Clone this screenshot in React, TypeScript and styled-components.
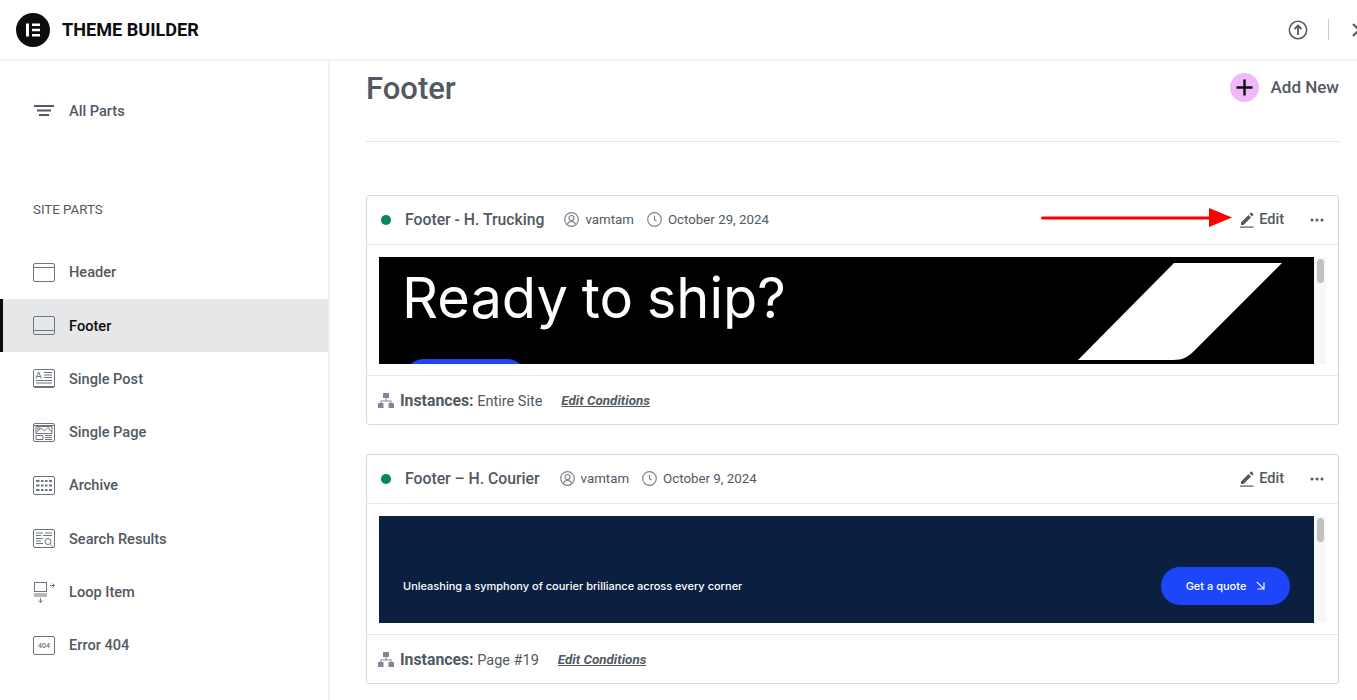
import React from 'react';
import styled, {createGlobalStyle} from 'styled-components';

const GlobalStyle = createGlobalStyle`
  html, body {
    margin: 0;
    padding: 0;
    height: 100%;
    overflow: hidden;
    background: #fff;
    font-family: Roboto, "Liberation Sans", sans-serif;
  }
`;

const Outline = () => <rect x="0.5" y="0.5" width="21" height="18" rx="1.5" />;

const HeaderIcon = () => (
    <SideSvg viewBox="0 0 22 19">
        <Outline />
        <path d="M1 4.500h20" />
    </SideSvg>
);

const FooterIcon = () => (
    <SideSvg viewBox="0 0 22 19">
        <Outline />
        <path d="M1 14.500h20" />
    </SideSvg>
);

const PostIcon = () => (
    <SideSvg viewBox="0 0 22 19">
        <Outline />
        <path d="M3 9.500 5.700 3l2.700 6.500M4 7.500h3.400M11 3.500h8M11 6h8M11 8.500h8M3 11.500h16M3 14h16M1 17.500h20" />
    </SideSvg>
);

const PageIcon = () => (
    <SideSvg viewBox="0 0 22 19">
        <Outline />
        <path d="M1 2.500h20M3 9.500 8 5l3.500 3 3.500-3.500 4 4.500M3 3.500h16v7H3zM3 12.500h7v4H3zM12 12.500h7M12 14.500h7M12 16.500h7" />
        <circle cx="5.500" cy="5.500" r="1" />
    </SideSvg>
);

const ArchiveIcon = () => (
    <SideSvg viewBox="0 0 22 19">
        <Outline />
        <path d="M3 5h3.500M8 5h2.500M12 5h2.500M16 5h3M3 9.500h3.500M8 9.500h2.500M12 9.500h2.500M16 9.500h3M3 14h3.500M8 14h2.500M12 14h2.500M16 14h3" strokeWidth="2.200" />
    </SideSvg>
);

const SearchIcon = () => (
    <SideSvg viewBox="0 0 22 19">
        <Outline />
        <path d="M3 4h7M12 4h7M3 6.500h5M10 6.500h9M3 9.500h7M3 12h5M3 14.500h7M17.500 15.500l2 2" />
        <circle cx="15" cy="12.500" r="3" />
    </SideSvg>
);

const LoopIcon = () => (
    <SideSvg viewBox="0 0 22 21">
        <rect x="1.500" y="0.500" width="12" height="9" />
        <path d="M1 12h13M1 14h13M17 3.500h4.500M19.500 1.500l2 2-2 2M7.500 16v4.500M5.500 18.500l2 2 2-2" />
    </SideSvg>
);

const ErrorIcon = () => (
    <SideSvg viewBox="0 0 22 19">
        <Outline />
        <text x="11" y="12" textAnchor="middle" fontSize="7" fill="currentColor" stroke="none">404</text>
    </SideSvg>
);

const PartsIcon = () => (
    <svg width="22" height="12" viewBox="0 0 22 12" fill="currentColor">
        <rect x="1" y="0" width="20" height="2" />
        <rect x="4" y="4.500" width="14" height="2" />
        <rect x="6" y="9" width="10" height="2" />
    </svg>
);

const Logo = () => (
    <svg width="34" height="34" viewBox="0 0 34 34">
        <circle cx="17" cy="17" r="17" fill="#0c0d0e" />
        <path d="M10 10.500h3v13h-3zM16 10.500h8v2.600h-8zM16 15.700h8v2.600h-8zM16 20.900h8v2.600h-8z" fill="#fff" />
    </svg>
);

const UploadIcon = () => (
    <svg width="20" height="20" viewBox="0 0 20 20" fill="none" stroke="#515962" strokeWidth="1.500">
        <circle cx="10" cy="10" r="8.700" />
        <path d="M10 15V6M6.500 9 10 5.500 13.500 9" strokeWidth="1.800" />
    </svg>
);

const CloseIcon = () => (
    <svg width="14" height="14" viewBox="0 0 14 14" fill="none" stroke="#515962" strokeWidth="2">
        <path d="M1 1l12 12M13 1 1 13" />
    </svg>
);

const PlusIcon = () => (
    <svg width="17" height="17" viewBox="0 0 17 17" fill="none" stroke="#0c0d0e" strokeWidth="2.400">
        <path d="M8.500 0.500v16M0.500 8.500h16" />
    </svg>
);

const UserIcon = () => (
    <svg width="15" height="15" viewBox="0 0 15 15" fill="none" stroke="#7d8490" strokeWidth="1.200">
        <circle cx="7.500" cy="7.500" r="6.800" />
        <circle cx="7.500" cy="6" r="2.500" />
        <path d="M3.200 12.500c.8-2 2.400-3 4.300-3s3.500 1 4.300 3" />
    </svg>
);

const ClockIcon = () => (
    <svg width="15" height="15" viewBox="0 0 15 15" fill="none" stroke="#7d8490" strokeWidth="1.200">
        <circle cx="7.500" cy="7.500" r="6.800" />
        <path d="M7.500 3.800v4l2 1.200" />
    </svg>
);

const PencilIcon = () => (
    <svg width="14" height="16" viewBox="0 0 14 16" fill="#515962">
        <path d="M1 10.500 8.500 3l2.500 2.500L3.500 13H1zM9.500 2l1.200-1.200a.8.8 0 0 1 1.100 0l1.400 1.400a.8.8 0 0 1 0 1.100L12 4.500z" />
        <rect x="0" y="14.500" width="13.500" height="1.200" />
    </svg>
);

const DotsIcon = () => (
    <svg width="14" height="4" viewBox="0 0 14 4" fill="#515962">
        <circle cx="2" cy="2" r="1.500" />
        <circle cx="7" cy="2" r="1.500" />
        <circle cx="12" cy="2" r="1.500" />
    </svg>
);

const SitemapIcon = () => (
    <svg width="16" height="15" viewBox="0 0 16 15" fill="#7d8799">
        <rect x="5" y="0" width="6" height="5" rx="0.600" />
        <rect x="0" y="10" width="5.500" height="5" rx="0.600" />
        <rect x="10.500" y="10" width="5.500" height="5" rx="0.600" />
        <path d="M7.500 5h1v2.500h5V10h-1V8.500h-9V10h-1V7.500h5z" />
    </svg>
);

const ArrowIcon = () => (
    <svg width="192" height="20" viewBox="0 0 192 20">
        <path d="M1.500 10H170" stroke="#ff0000" strokeWidth="3" strokeLinecap="round" />
        <path d="M168 0l23 9.500L168 19z" fill="#ff0000" />
    </svg>
);

const Slash = () => (
    <svg width="205" height="98" viewBox="0 0 205 98">
        <path d="M96 0h108l-87 87c-7 7-12 10-22 10H0z" fill="#fff" />
    </svg>
);

const QuoteArrow = () => (
    <svg width="9" height="9" viewBox="0 0 9 9" fill="none" stroke="#fff" strokeWidth="1.200">
        <path d="M0.800 0.800l7 7M8 1.500V8H1.500" />
    </svg>
);

const parts = [
    {label: 'Header', icon: <HeaderIcon />},
    {label: 'Footer', icon: <FooterIcon />, active: true},
    {label: 'Single Post', icon: <PostIcon />},
    {label: 'Single Page', icon: <PageIcon />},
    {label: 'Archive', icon: <ArchiveIcon />},
    {label: 'Search Results', icon: <SearchIcon />},
    {label: 'Loop Item', icon: <LoopIcon />},
    {label: 'Error 404', icon: <ErrorIcon />},
];

type TemplateCardProps = {
    title: string;
    date: string;
    instances: string;
    arrow?: boolean;
    children: React.ReactNode;
};

function TemplateCard({title, date, instances, arrow, children}: TemplateCardProps) {
    return (
        <Card>
            <CardHead>
                <StatusDot />
                <CardTitle>{title}</CardTitle>
                <Meta>
                    <UserIcon />
                    <span>vamtam</span>
                </Meta>
                <Meta>
                    <ClockIcon />
                    <span>{date}</span>
                </Meta>
                <EditLink>
                    <PencilIcon />
                    <span>Edit</span>
                </EditLink>
                <DotsIcon />
            </CardHead>
            <PreviewWrap>
                <Preview>
                    {children}
                    <ScrollTrack>
                        <ScrollThumb />
                    </ScrollTrack>
                </Preview>
            </PreviewWrap>
            <CardFoot>
                <SitemapIcon />
                <Instances>
                    <strong>Instances:</strong> {instances}
                </Instances>
                <Conditions>Edit Conditions</Conditions>
            </CardFoot>
            {arrow && (
                <ArrowMark>
                    <ArrowIcon />
                </ArrowMark>
            )}
        </Card>
    );
}

function App() {
    return (
        <Page>
            <GlobalStyle />
            <TopBar>
                <Logo />
                <Brand>THEME BUILDER</Brand>
                <TopActions>
                    <UploadIcon />
                    <TopDivider />
                    <CloseIcon />
                </TopActions>
            </TopBar>
            <Body>
                <Sidebar>
                    <AllParts>
                        <PartsIcon />
                        <span>All Parts</span>
                    </AllParts>
                    <SideHeading>SITE PARTS</SideHeading>
                    {parts.map((part) => (
                        <SideItem key={part.label} $active={part.active}>
                            <IconSlot>{part.icon}</IconSlot>
                            <span>{part.label}</span>
                        </SideItem>
                    ))}
                </Sidebar>
                <Main>
                    <TitleRow>
                        <Title>Footer</Title>
                        <AddNew>
                            <AddCircle>
                                <PlusIcon />
                            </AddCircle>
                            <AddLabel>Add New</AddLabel>
                        </AddNew>
                    </TitleRow>
                    <CardList>
                        <TemplateCard title="Footer - H. Trucking" date="October 29, 2024" instances="Entire Site" arrow>
                            <ShipBanner>
                                <ShipColumn>
                                    <ShipHeading>Ready to ship?</ShipHeading>
                                    <ShipButton />
                                </ShipColumn>
                                <Slash />
                            </ShipBanner>
                        </TemplateCard>
                        <TemplateCard title="Footer – H. Courier" date="October 9, 2024" instances="Page #19">
                            <CourierBanner>
                                <CourierText>Unleashing a symphony of courier brilliance across every corner</CourierText>
                                <QuoteButton>
                                    <span>Get a quote</span>
                                    <QuoteArrow />
                                </QuoteButton>
                            </CourierBanner>
                        </TemplateCard>
                    </CardList>
                </Main>
            </Body>
        </Page>
    );
}

const Page = styled.div`
  width: 1357px;
  height: 700px;
  overflow: hidden;
  display: flex;
  flex-direction: column;
  color: #515962;
`;

const TopBar = styled.header`
  flex: none;
  height: 59px;
  display: flex;
  align-items: center;
  padding-left: 16px;
  border-bottom: 2px solid #f1f2f3;
`;

const Brand = styled.div`
  margin-left: 12px;
  font-size: 18.1px;
  font-weight: 700;
  color: #0c0d0e;
`;

const TopActions = styled.div`
  margin-left: auto;
  margin-right: -9px;
  display: flex;
  align-items: center;
  gap: 20px;
`;

const TopDivider = styled.div`
  width: 1px;
  height: 21px;
  margin-right: 3px;
  background: #c9ccd2;
`;

const Body = styled.div`
  flex: 1;
  display: flex;
  min-height: 0;
`;

const Sidebar = styled.aside`
  flex: none;
  width: 328px;
  border-right: 2px solid #f1f2f3;
  padding-top: 23.7px;
`;

const SideSvg = styled.svg`
  width: 22px;
  height: auto;
  fill: none;
  stroke: currentColor;
  stroke-width: 1;
  color: #6d7480;
`;

const IconSlot = styled.div`
  width: 22px;
  display: flex;
  align-items: center;
  justify-content: center;
`;

const AllParts = styled.div`
  height: 53px;
  display: flex;
  align-items: center;
  gap: 14px;
  padding-left: 33px;
  font-size: 14.6px;
  font-weight: 500;
`;

const SideHeading = styled.div`
  margin: 57px 0 21px 33px;
  height: 30px;
  line-height: 30px;
  font-size: 13.3px;
`;

const SideItem = styled.div<{$active?: boolean}>`
  height: 53.29px;
  box-sizing: border-box;
  display: flex;
  align-items: center;
  gap: 14px;
  padding-left: ${({$active}) => ($active ? '30px' : '33px')};
  border-left: ${({$active}) => ($active ? '3px solid #0c0d0e' : 'none')};
  background: ${({$active}) => ($active ? '#e6e7e9' : 'transparent')};
  color: ${({$active}) => ($active ? '#0c0d0e' : '#515962')};
  font-size: 14.6px;
  font-weight: 500;
`;

const Main = styled.main`
  flex: 1;
  min-width: 0;
  padding: 0 18px 0 36px;
`;

const TitleRow = styled.div`
  height: 81px;
  box-sizing: border-box;
  display: flex;
  align-items: center;
  justify-content: space-between;
  padding-bottom: 28px;
  padding-top: 1px;
  border-bottom: 1px solid #e3e5e8;
`;

const Title = styled.h1`
  margin: 2px 0 0;
  font-size: 31px;
  font-weight: 500;
  color: #515962;
`;

const AddNew = styled.div`
  display: flex;
  align-items: center;
  gap: 12px;
  font-size: 17px;
  font-weight: 500;
`;

const AddLabel = styled.span`
  margin-bottom: 2px;
`;

const AddCircle = styled.div`
  width: 29px;
  height: 29px;
  border-radius: 50%;
  background: #f1b9fb;
  display: flex;
  align-items: center;
  justify-content: center;
`;

const CardList = styled.div`
  margin-top: 53px;
  display: flex;
  flex-direction: column;
  gap: 29px;
`;

const Card = styled.section`
  position: relative;
  height: 230px;
  box-sizing: border-box;
  border: 1px solid #d5d8dc;
  border-radius: 3px;
  background: #fff;
`;

const CardHead = styled.div`
  height: 49px;
  box-sizing: border-box;
  display: flex;
  align-items: center;
  padding: 0 14px 1px 14px;
  border-bottom: 1px solid #e6e8ea;
`;

const StatusDot = styled.div`
  width: 10px;
  height: 10px;
  border-radius: 50%;
  background: #0a875a;
  box-shadow: 0 0 3px rgba(0, 0, 0, 0.12);
`;

const CardTitle = styled.div`
  margin-left: 14px;
  margin-right: 20px;
  font-size: 15.75px;
  font-weight: 500;
`;

const Meta = styled.div`
  display: flex;
  align-items: center;
  gap: 6px;
  margin-right: 13px;
  font-size: 13.3px;
`;

const EditLink = styled.div`
  margin-left: auto;
  margin-right: 26px;
  display: flex;
  align-items: center;
  gap: 5px;
  font-size: 14.5px;
  font-weight: 500;
`;

const PreviewWrap = styled.div`
  padding: 12px 12px 11px;
  border-bottom: 1px solid #e6e8ea;
`;

const Preview = styled.div`
  height: 107px;
  display: flex;
  overflow: hidden;
`;

const ScrollTrack = styled.div`
  flex: none;
  width: 12px;
  background: #f7f7f7;
  padding: 2px 2px 0 3px;
  box-sizing: border-box;
`;

const ScrollThumb = styled.div`
  height: 24px;
  border-radius: 4px;
  background: #c1c1c1;
`;

const ShipBanner = styled.div`
  flex: 1;
  background: #000;
  display: flex;
  justify-content: space-between;
  padding: 6px 31px 0 23px;
`;

const ShipColumn = styled.div`
  display: flex;
  flex-direction: column;
`;

const ShipHeading = styled.div`
  flex: none;
  font-family: Inter, "Liberation Sans", sans-serif;
  font-size: 56px;
  line-height: 70px;
  word-spacing: -2px;
  color: #fff;
`;

const ShipButton = styled.div`
  flex: none;
  margin: 26px 0 0 2px;
  width: 123px;
  height: 40px;
  border-radius: 20px;
  background: #1d46fb;
`;

const CourierBanner = styled.div`
  flex: 1;
  background: #0b2040;
  display: flex;
  align-items: center;
  justify-content: space-between;
  padding: 32px 24px 0 24px;
`;

const CourierText = styled.div`
  font-family: Inter, "Liberation Sans", sans-serif;
  font-size: 11px;
  font-weight: 500;
  color: #fff;
`;

const QuoteButton = styled.div`
  width: 129px;
  height: 38px;
  border-radius: 19px;
  background: #1d46fb;
  color: #fff;
  font-family: Inter, "Liberation Sans", sans-serif;
  font-size: 11px;
  font-weight: 500;
  display: flex;
  align-items: center;
  justify-content: center;
  gap: 10px;
`;

const CardFoot = styled.div`
  height: 48px;
  display: flex;
  align-items: center;
  padding-left: 11px;
`;

const Instances = styled.div`
  margin-left: 6px;
  font-size: 14.5px;
  strong {
    font-size: 15.8px;
    font-weight: 700;
  }
`;

const Conditions = styled.a`
  margin-left: 19px;
  font-size: 13.4px;
  font-weight: 700;
  font-style: italic;
  text-decoration: underline;
`;

const ArrowMark = styled.div`
  position: absolute;
  left: 674px;
  top: 12px;
  line-height: 0;
`;

export default App;
